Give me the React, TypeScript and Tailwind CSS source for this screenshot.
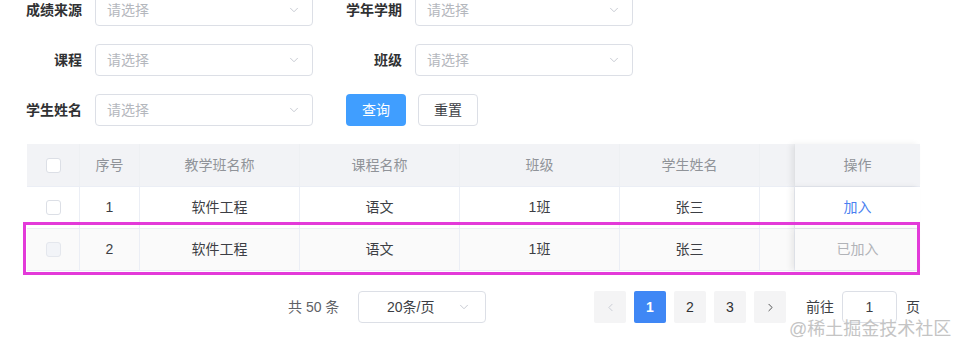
import { ChevronDown, ChevronLeft, ChevronRight } from "lucide-react";

const font = { fontFamily: '"Liberation Sans", "Noto Sans CJK SC", sans-serif' };

function Select({ placeholder = "请选择" }: { placeholder?: string }) {
  return (
    <div className="flex h-[32px] w-[218px] items-center justify-between rounded border border-[#dcdfe6] bg-white pl-[11px] pr-[11px]">
      <span className="text-[14px] text-[#b4b7bd]">{placeholder}</span>
      <ChevronDown className="h-[14px] w-[14px] text-[#c0c4cc]" strokeWidth={1.5} />
    </div>
  );
}

function FormItem({ label }: { label: string }) {
  return (
    <div className="flex items-center">
      <label className="w-[90px] pr-[13px] text-right text-[14px] font-semibold text-[#303133]">
        {label}
      </label>
      <Select />
    </div>
  );
}

function Checkbox({ disabled = false }: { disabled?: boolean }) {
  return (
    <span
      className={
        disabled
          ? "inline-block h-[15px] w-[15px] rounded-[3px] border border-[#e4e7ed] bg-[#f2f4f8]"
          : "inline-block h-[15px] w-[15px] rounded-[3px] border border-[#dcdfe6] bg-white"
      }
    />
  );
}

const cols = ["w-[53px]", "w-[60px]", "w-[160px]", "w-[160px]", "w-[160px]", "w-[140px]", "w-[35px]"];

const rows = [
  { no: "1", cls: "软件工程", course: "语文", klass: "1班", name: "张三", joined: false },
  { no: "2", cls: "软件工程", course: "语文", klass: "1班", name: "张三", joined: true },
];

function DataTable() {
  const headers = ["", "序号", "教学班名称", "课程名称", "班级", "学生姓名", ""];
  return (
    <div className="relative ml-[27px] mt-[18px] w-[893px]">
      <div className="flex h-[43px] border-b border-[#ebeef5] bg-[#f2f3f6] text-[14px] text-[#909399]">
        {headers.map((h, i) => (
          <div
            key={i}
            className={`${cols[i]} flex items-center justify-center border-r border-[#eef0f3]`}
          >
            {i === 0 ? <Checkbox /> : h}
          </div>
        ))}
        <div className="flex w-[125px] items-center justify-center bg-[#f2f3f6] shadow-[-4px_0_6px_rgba(0,0,0,0.07)]">
          操作
        </div>
      </div>
      {rows.map((r, ri) => (
        <div
          key={r.no}
          className={`flex h-[42px] border-b border-[#ebeef5] text-[14px] text-[#3c3e44] ${
            ri === 1 ? "bg-[#fafafa]" : "bg-white"
          }`}
        >
          {[null, r.no, r.cls, r.course, r.klass, r.name, ""].map((v, i) => (
            <div
              key={i}
              className={`${cols[i]} flex items-center justify-center border-r border-[#ebeef5]`}
            >
              {i === 0 ? <Checkbox disabled={r.joined} /> : v}
            </div>
          ))}
          <div
            className={`flex w-[125px] items-center justify-center shadow-[-4px_0_6px_rgba(0,0,0,0.07)] ${
              ri === 1 ? "bg-[#fafafa]" : "bg-white"
            }`}
          >
            {r.joined ? (
              <span className="text-[#b1b3b8]">已加入</span>
            ) : (
              <span className="text-[#4a7ff0]">加入</span>
            )}
          </div>
        </div>
      ))}
      {/* annotation frame around the second row */}
      <div className="pointer-events-none absolute left-[-4px] top-[78px] h-[53px] w-[897px] border-[3px] border-[#e33ad9]" />
    </div>
  );
}

function Pager() {
  const btn = "flex h-[32px] w-[32px] items-center justify-center rounded-[2px] text-[14px]";
  return (
    <div className="mt-[20px] flex h-[32px] items-center text-[14px] text-[#606266]">
      <span className="ml-[288px] w-[54px]">共 50 条</span>
      <div className="ml-[16px] flex h-[32px] w-[128px] items-center justify-between rounded border border-[#dcdfe6] pl-[28px] pr-[14px]">
        <span className="text-[#3c3e44]">20条/页</span>
        <ChevronDown className="h-[14px] w-[14px] text-[#c0c4cc]" strokeWidth={1.5} />
      </div>
      <div className="ml-[108px] flex items-center gap-[8px]">
        <span className={`${btn} bg-[#f4f4f5] text-[#c0c4cc]`}>
          <ChevronLeft className="h-[13px] w-[13px]" strokeWidth={1.5} />
        </span>
        <span className={`${btn} bg-[#3f87f5] font-bold text-white`}>1</span>
        <span className={`${btn} bg-[#f4f4f5] text-[#303133]`}>2</span>
        <span className={`${btn} bg-[#f4f4f5] text-[#303133]`}>3</span>
        <span className={`${btn} bg-[#f4f4f5] text-[#303133]`}>
          <ChevronRight className="h-[13px] w-[13px]" strokeWidth={1.5} />
        </span>
      </div>
      <span className="ml-[20px] text-[#3c3e44]">前往</span>
      <div className="ml-[8px] flex h-[32px] w-[55px] items-center justify-center rounded border border-[#dcdfe6] text-[#3c3e44]">
        1
      </div>
      <span className="ml-[9px] text-[#3c3e44]">页</span>
    </div>
  );
}

export default function App() {
  return (
    <div className="relative h-[348px] w-[955px] overflow-hidden bg-white" style={font}>
      <div className="ml-[5px] mt-[-6px] flex flex-col gap-[18px]">
        <div className="flex gap-[12px]">
          <FormItem label="成绩来源" />
          <FormItem label="学年学期" />
        </div>
        <div className="flex gap-[12px]">
          <FormItem label="课程" />
          <FormItem label="班级" />
        </div>
        <div className="flex items-center">
          <FormItem label="学生姓名" />
          <button className="ml-[33px] h-[32px] w-[60px] rounded bg-[#409eff] text-[14px] text-white">
            查询
          </button>
          <button className="ml-[12px] h-[32px] w-[60px] rounded border border-[#dcdfe6] bg-white text-[14px] text-[#3c3e44]">
            重置
          </button>
        </div>
      </div>
      <DataTable />
      <Pager />
      <span className="absolute left-[789px] top-[316px] text-[18px] text-[#c4c4c4]">
        @稀土掘金技术社区
      </span>
    </div>
  );
}
